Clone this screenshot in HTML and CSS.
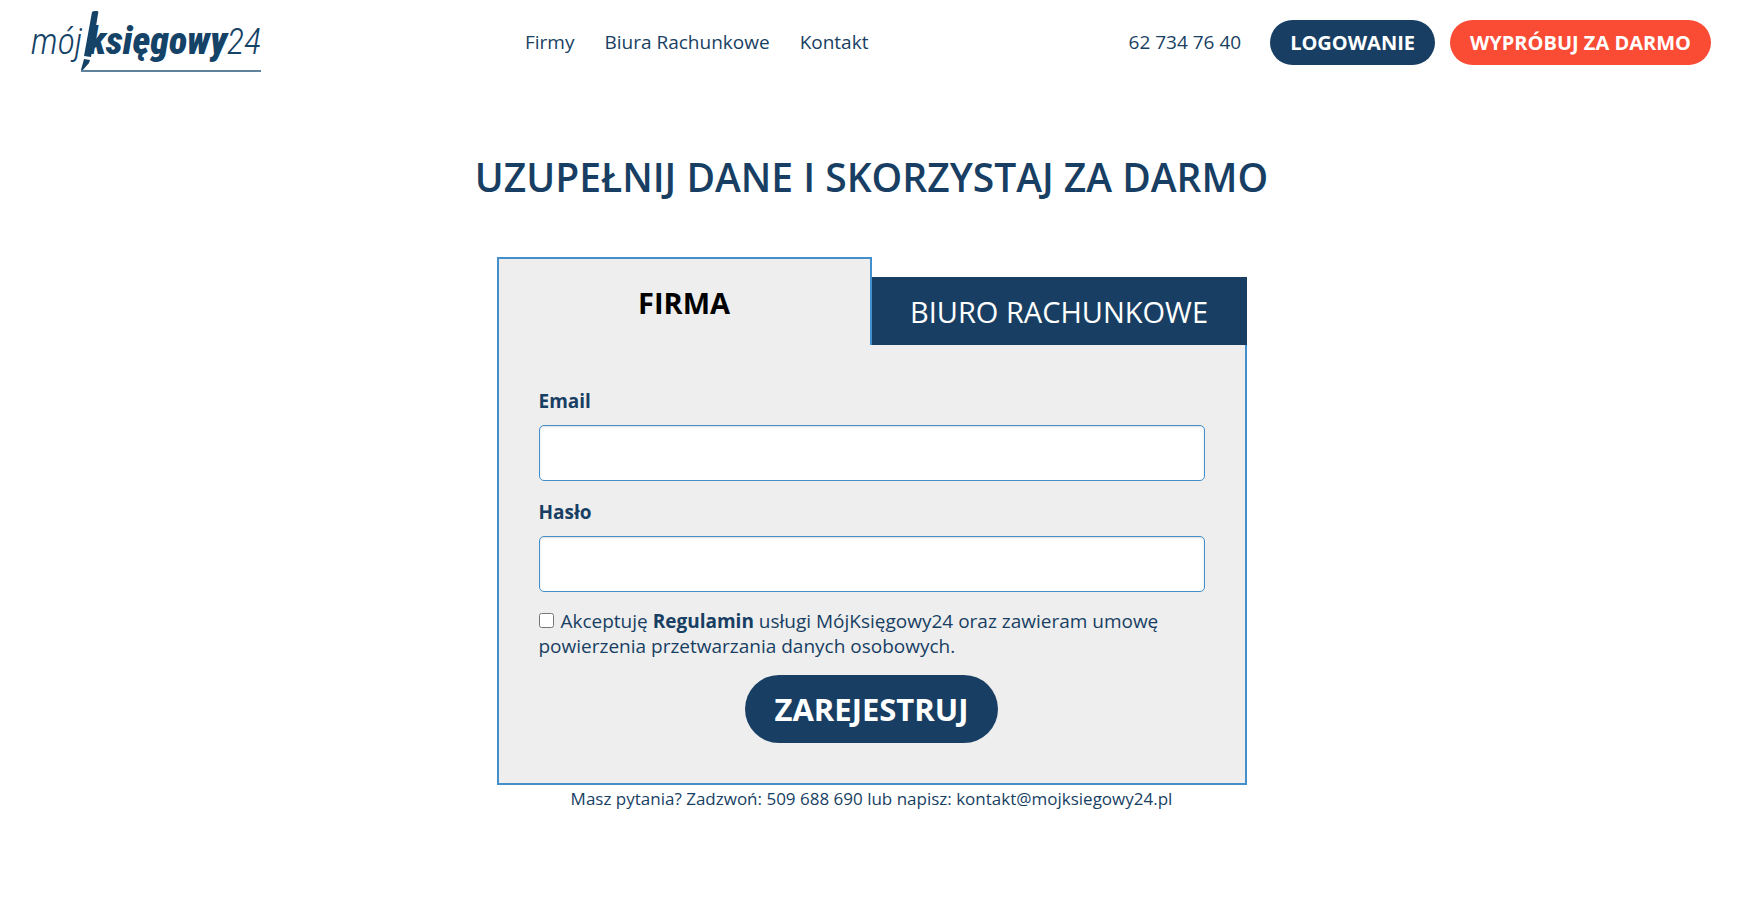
FILE: index.html
```html
<!DOCTYPE html>
<html lang="pl">
<head>
    <meta charset="utf-8">
    <title>mójksięgowy24</title>
    <link rel="stylesheet" href="styles.css">
</head>
<body>
    <header class="topbar">
        <a class="logo" href="#">
            <svg width="240" height="66" viewBox="0 0 240 66" role="img" aria-label="mójksięgowy24">
                <g class="logo-text">
                    <text class="logo-thin" x="0" y="44">mój</text>
                    <text class="logo-bold" x="57" y="44">księgowy</text>
                    <text class="logo-thin" x="196" y="44">24</text>
                </g>
                <!-- pen and the line it draws -->
                <path d="M61 2 Q62 1 64 1 L66 1 Q68 1 67 4 L60 47 L53 46 Z" fill="#154267"/>
                <path d="M53 49 L59 50 L58 53 L51 61 L50 60 Z" fill="#154267"/>
                <path d="M50 61 H230" stroke="#5f829d" stroke-width="2" fill="none"/>
            </svg>
        </a>
        <nav class="menu">
            <a href="#">Firmy</a>
            <a href="#">Biura Rachunkowe</a>
            <a href="#">Kontakt</a>
        </nav>
        <div class="actions">
            <a class="phone" href="tel:627347640">62 734 76 40</a>
            <button type="button" class="btn">LOGOWANIE</button>
            <button type="button" class="btn btn-try">WYPRÓBUJ ZA DARMO</button>
        </div>
    </header>
    <main>
        <h1>UZUPEŁNIJ DANE I SKORZYSTAJ ZA DARMO</h1>
        <div class="card">
            <div class="tabs">
                <button type="button" class="tab active">FIRMA</button>
                <button type="button" class="tab">BIURO RACHUNKOWE</button>
            </div>
            <form class="panel">
                <label class="field-label" for="email">Email</label>
                <input class="field" type="email" id="email" name="email">
                <label class="field-label" for="password">Hasło</label>
                <input class="field" type="password" id="password" name="password">
                <div class="terms">
                    <input type="checkbox" id="terms" name="terms">
                    <label for="terms">Akceptuję <a href="#">Regulamin</a> usługi MójKsięgowy24 oraz zawieram umowę powierzenia przetwarzania danych osobowych.</label>
                </div>
                <button type="submit" class="btn btn-submit">ZAREJESTRUJ</button>
            </form>
        </div>
        <p class="contact">Masz pytania? Zadzwoń: 509 688 690 lub napisz: kontakt@mojksiegowy24.pl</p>
    </main>
</body>
</html>
```
FILE: styles.css
```css
:root {
    --navy: #183f63;
    --blue: #428fcc;
    --red: #fa4b35;
    --grey: #eee;
}
* { box-sizing: border-box; }
body { margin: 0; font-family: 'Open Sans', 'Noto Sans', sans-serif; font-size: 19px; font-weight: 400; line-height: 25px; color: var(--navy); background: #fff; }
a { color: inherit; text-decoration: none; }
button { font-family: inherit; cursor: pointer; border: none; }

/* header */
.topbar { display: flex; align-items: center; height: 85px; padding: 0 44px 0 31px; }
.logo { width: 494px; display: flex; }
.logo-text { font-family: 'Roboto Condensed', Roboto, sans-serif; font-style: italic; fill: #154267; }
.logo-thin { font-size: 36px; font-weight: 300; }
.logo-bold { font-size: 38px; font-weight: 900; }
.menu { display: flex; gap: 30px; }
.actions { display: flex; align-items: center; gap: 15px; margin-left: auto; }
.phone { margin-right: 14px; }
.btn { background: var(--navy); color: #fff; font-size: 20px; font-weight: 700; line-height: 25px; padding: 10px 20px; border-radius: 34px; }
.btn-try { background: var(--red); }

main { padding-right: 12px; }
h1 { margin: 65px 0 53px; text-align: center; font-size: 39px; font-weight: 600; line-height: 54px; }

/* register card */
.card { width: 750px; max-width: 100%; margin: 0 auto; }
.tabs { display: flex; align-items: flex-end; }
.tab { width: 50%; height: 68px; padding: 0; background: var(--navy); color: #fff; font-size: 29px; font-weight: 400; }
.tab.active { height: 88px; background: var(--grey); color: #000; font-weight: 700; border: 2px solid var(--blue); border-bottom: none; }
.panel { display: flex; flex-direction: column; background: var(--grey); border: 2px solid var(--blue); border-top: none; padding: 44px 40px 40px; }
.field-label { font-weight: 700; margin-bottom: 11px; }
.field { height: 56px; margin-bottom: 19px; padding: 6px 12px; font: inherit; color: inherit; background: #fff; border: 1px solid var(--blue); border-radius: 5px; box-shadow: inset 0 1px 2px #0002; }
.terms { margin: -2px 0 16px; }
.terms input { width: 15px; height: 15px; margin: 0 2px 0 0; }
.terms a { font-weight: 700; }
.btn-submit { align-self: center; font-size: 31px; line-height: 38px; padding: 15px 30px; }
.contact { margin: 0; text-align: center; font-size: 17px; line-height: 28px; }
```
